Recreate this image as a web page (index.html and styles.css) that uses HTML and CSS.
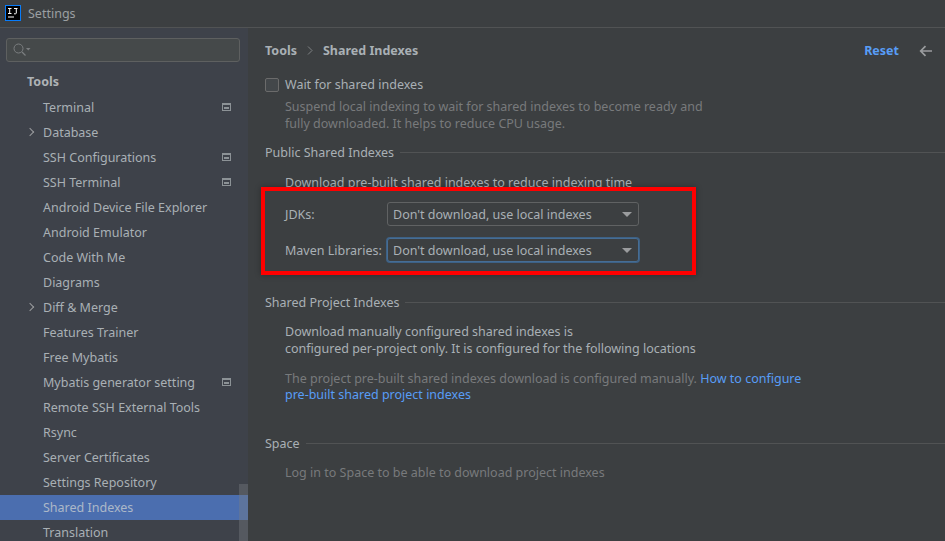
FILE: index.html
```html
<!DOCTYPE html>
<html lang="en">
<head>
    <meta charset="UTF-8">
    <title>Settings</title>
    <link rel="stylesheet" href="styles.css">
</head>
<body>
    <div class="titlebar">
        <svg class="app-icon" width="16" height="16" viewBox="0 0 16 16">
            <rect width="16" height="16" fill="#087cfa"/>
            <rect x="1" y="1" width="14" height="14" fill="#000"/>
            <path d="M3 3.500h3.500M4.700 3.500v5M3 8.500h3.500M9 3.500h3.500M11.300 3.500v4.500q0 .8-.8.8H9" stroke="#fff" stroke-width="1" fill="none"/>
            <rect x="3" y="11.500" width="6" height="1" fill="#fff"/>
        </svg>
        <span>Settings</span>
    </div>

    <div class="main">
        <div class="sidebar">
            <div class="search">
                <svg width="20" height="16" viewBox="0 0 20 16">
                    <circle cx="6.500" cy="6.500" r="4.500" fill="none" stroke="#7b7e80" stroke-width="1"/>
                    <path d="M10 10l3.500 3.500" stroke="#7b7e80" stroke-width="1.300"/>
                    <path d="M14 6h4.500l-2.250 2.500z" fill="#7b7e80"/>
                </svg>
            </div>
            <div class="tree">
                <div class="tree-group">Tools</div>
                <div class="tree-item">Terminal<span class="project-icon"></span></div>
                <div class="tree-item"><span class="arrow"></span>Database</div>
                <div class="tree-item">SSH Configurations<span class="project-icon"></span></div>
                <div class="tree-item">SSH Terminal<span class="project-icon"></span></div>
                <div class="tree-item">Android Device File Explorer</div>
                <div class="tree-item">Android Emulator</div>
                <div class="tree-item">Code With Me</div>
                <div class="tree-item">Diagrams</div>
                <div class="tree-item"><span class="arrow"></span>Diff &amp; Merge</div>
                <div class="tree-item">Features Trainer</div>
                <div class="tree-item">Free Mybatis</div>
                <div class="tree-item">Mybatis generator setting<span class="project-icon"></span></div>
                <div class="tree-item">Remote SSH External Tools</div>
                <div class="tree-item">Rsync</div>
                <div class="tree-item">Server Certificates</div>
                <div class="tree-item">Settings Repository</div>
                <div class="tree-item selected">Shared Indexes</div>
                <div class="tree-item">Translation</div>
            </div>
            <div class="scroll-thumb"></div>
        </div>

        <div class="content">
            <div class="top-row">
                <div class="crumbs">
                    <span>Tools</span>
                    <svg width="6" height="9" viewBox="0 0 6 9"><path d="M1 .5l4 4-4 4" fill="none" stroke="#7f8284"/></svg>
                    <span>Shared Indexes</span>
                </div>
                <div class="top-actions">
                    <span class="reset">Reset</span>
                    <svg width="14" height="12" viewBox="0 0 14 12"><path d="M13 6H2M6.500 1.200L1.700 6l4.800 4.800" fill="none" stroke="#9a9c9e" stroke-width="1.700"/></svg>
                </div>
            </div>

            <label class="check-row"><span class="checkbox"></span>Wait for shared indexes</label>
            <p class="note indent muted">Suspend local indexing to wait for shared indexes to become ready and<br>fully downloaded. It helps to reduce CPU usage.</p>

            <div class="section public">Public Shared Indexes</div>
            <p class="indent intro">Download pre-built shared indexes to reduce indexing time</p>
            <div class="form-row first">
                <span class="form-label">JDKs:</span>
                <div class="combo"><span>Don't download, use local indexes</span><i class="caret"></i></div>
            </div>
            <div class="form-row">
                <span class="form-label">Maven Libraries:</span>
                <div class="combo focused"><span>Don't download, use local indexes</span><i class="caret"></i></div>
            </div>

            <div class="section project">Shared Project Indexes</div>
            <p class="indent para">Download manually configured shared indexes is<br>configured per-project only. It is configured for the following locations</p>
            <p class="indent para2 muted">The project pre-built shared indexes download is configured manually. <a>How to configure</a><br><a>pre-built shared project indexes</a></p>

            <div class="section space">Space</div>
            <p class="indent login muted">Log in to Space to be able to download project indexes</p>

            <div class="highlight"></div>
        </div>
    </div>
</body>
</html>
```

FILE: styles.css
```css
html, body {
    height: 100%;
}
body {
    margin: 0;
    overflow: hidden;
    background-color: #3c3f41;
    color: #a9b0b5;
    font-family: "Noto Sans", sans-serif;
    font-size: 12.5px;
    line-height: 17px;
}
p {
    margin: 0;
}
.titlebar {
    display: flex;
    align-items: center;
    gap: 7px;
    height: 27px;
    padding-left: 5px;
    border-bottom: 1px solid #515354;
    background-color: #3c3f41;
    color: #9b9fa2;
}
.app-icon {
    margin-bottom: 1px;
}
.main {
    display: flex;
    height: 513px;
}
.sidebar {
    position: relative;
    flex: none;
    width: 248px;
    background-color: #3e424a;
    overflow: hidden;
}
.search {
    display: flex;
    align-items: center;
    box-sizing: border-box;
    height: 24px;
    margin: 10px 8px 0 6px;
    padding-left: 5px;
    border: 1px solid #5e6060;
    border-radius: 3px;
    background-color: #45494a;
}
.tree {
    margin-top: 7px;
}
.tree-group {
    height: 26px;
    padding-left: 27px;
    line-height: 25px;
    font-weight: bold;
    color: #aeb3b6;
}
.tree-item {
    position: relative;
    height: 25px;
    padding-left: 43px;
    line-height: 25px;
}
.tree-item.selected {
    background-color: #4b6eaf;
    color: #abb8c8;
}
.arrow {
    position: absolute;
    left: 27px;
    top: 9px;
    width: 5px;
    height: 5px;
    border-top: 1.500px solid #9a9c9e;
    border-right: 1.500px solid #9a9c9e;
    transform: rotate(45deg);
}
.project-icon {
    position: absolute;
    right: 17px;
    top: 8px;
    box-sizing: border-box;
    width: 9px;
    height: 8px;
    border: 1px solid #8c9296;
    border-top-width: 2px;
    background: linear-gradient(#8c9296, #8c9296) center / 5px 2px no-repeat;
}
.scroll-thumb {
    position: absolute;
    right: 0;
    top: 456px;
    width: 9px;
    height: 57px;
    background-color: rgba(120, 125, 130, 0.4);
}
.content {
    position: relative;
    flex: 1;
    padding: 0 0 0 17px;
    background-color: #3c3f41;
}
.top-row {
    display: flex;
    justify-content: space-between;
    align-items: center;
    height: 17px;
    padding-top: 14px;
}
.crumbs {
    display: flex;
    align-items: center;
    gap: 10px;
    font-weight: bold;
    color: #a9b0b5;
}
.top-actions {
    display: flex;
    align-items: center;
    gap: 20px;
    padding-right: 12px;
}
.reset {
    font-weight: bold;
    color: #589df6;
}
.check-row {
    display: flex;
    align-items: center;
    gap: 6px;
    margin-top: 17px;
    height: 17px;
}
.checkbox {
    box-sizing: border-box;
    width: 14px;
    height: 14px;
    border: 1px solid #6b6b6b;
    border-radius: 2px;
    background-color: #43474a;
}
.indent {
    padding-left: 20px;
}
.muted {
    color: #787a7c;
}
.note {
    margin-top: 5px;
}
.section {
    display: flex;
    align-items: center;
    gap: 6px;
    height: 17px;
}
.section::after {
    content: "";
    flex: 1;
    height: 1px;
    background-color: #515354;
}
.public {
    margin-top: 12px;
}
.intro {
    margin-top: 13px;
}
.form-row {
    display: flex;
    align-items: center;
    height: 24px;
    margin-top: 12px;
    padding-left: 20px;
}
.form-row.first {
    margin-top: 11px;
}
.form-label {
    width: 102px;
}
.combo {
    display: flex;
    justify-content: space-between;
    align-items: center;
    box-sizing: border-box;
    width: 252px;
    height: 24px;
    padding: 0 6px 0 5px;
    border: 1px solid #606263;
    border-radius: 3px;
    background-color: #3c3f41;
}
.combo.focused {
    border-color: #466d94;
    box-shadow: 0 0 0 1px #3d6185;
}
.caret {
    width: 0;
    height: 0;
    border-left: 5px solid transparent;
    border-right: 5px solid transparent;
    border-top: 5px solid #9a9c9e;
}
.project {
    margin-top: 32px;
}
.para {
    margin-top: 12px;
}
.para2 {
    margin-top: 14px;
    line-height: 16px;
}
.para2 a {
    color: #589df6;
}
.space {
    margin-top: 32px;
}
.login {
    margin-top: 12px;
}
.highlight {
    position: absolute;
    left: 13px;
    top: 159px;
    box-sizing: border-box;
    width: 435px;
    height: 88px;
    border: 4px solid #ff0000;
    box-shadow: 0 0 6px rgba(0, 0, 0, 0.3);
}
```
